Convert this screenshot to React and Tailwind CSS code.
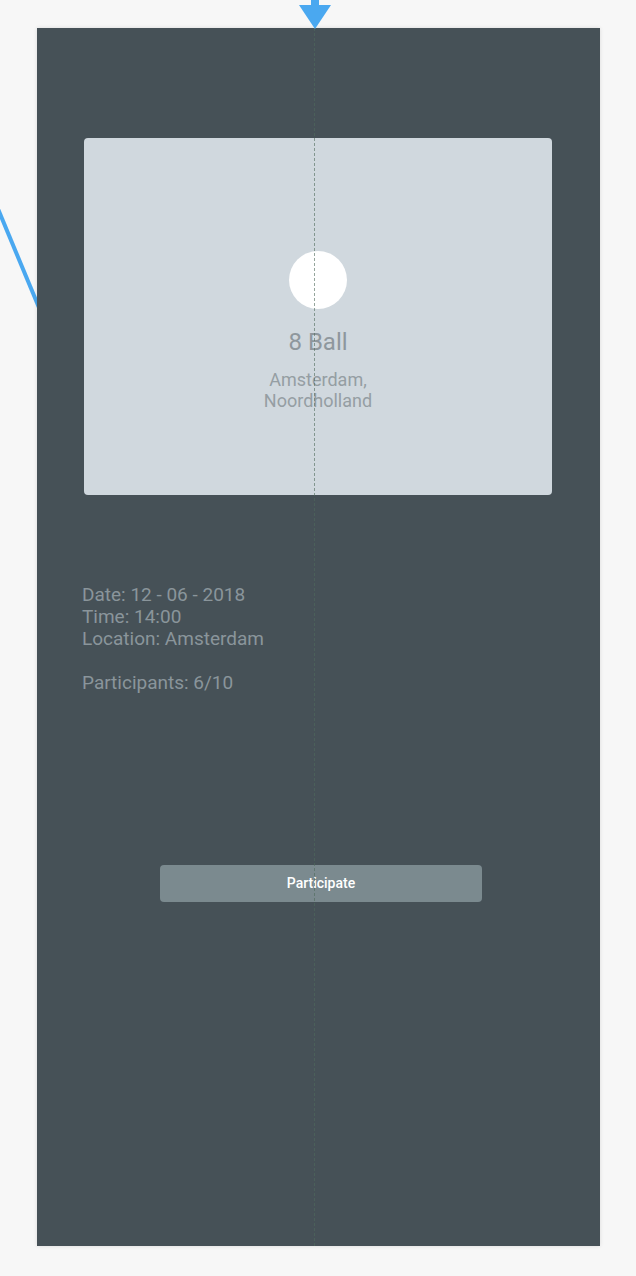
export default function App() {
  return (
    <div className="relative w-[636px] h-[1276px] overflow-hidden bg-[#f7f7f7] font-['Roboto',sans-serif]">
      {/* connector line coming from the left */}
      <svg className="absolute left-0 top-[200px]" width="40" height="120" viewBox="0 0 40 120">
        <line x1="-2" y1="9" x2="40" y2="110" stroke="#4aa8f0" strokeWidth="4" />
      </svg>

      {/* screen frame */}
      <div className="relative ml-[37px] mt-[28px] w-[563px] h-[1218px] bg-[#465157] shadow-[0_0_4px_rgba(0,0,0,0.12)]">
        <div className="pt-[110px] pl-[47px]">
          <div className="w-[468px] h-[357px] rounded-[4px] bg-[#d0d8de] flex flex-col items-center pt-[113px]">
            <div className="w-[58px] h-[58px] rounded-full bg-white" />
            <div className="mt-[18px] text-[24px] leading-[30px] text-[#8e979d]">8 Ball</div>
            <div className="mt-[12px] text-[18px] leading-[21px] text-[#959ea3] text-center">
              Amsterdam,
              <br />
              Noordholland
            </div>
          </div>
        </div>

        <div className="mt-[89px] pl-[45px] text-[19px] leading-[22px] text-[#8a959b]">
          <div>Date: 12 - 06 - 2018</div>
          <div>Time: 14:00</div>
          <div>Location: Amsterdam</div>
          <div className="mt-[22px]">Participants: 6/10</div>
        </div>

        <button className="mt-[171px] ml-[123px] w-[322px] h-[37px] rounded-[4px] bg-[#7b8a8f] text-white text-[14px] font-medium">
          Participate
        </button>

        {/* center guide */}
        <div className="absolute left-[277px] top-0 h-full border-l border-dashed border-[#4f6b5c] opacity-60" />
      </div>

      {/* arrow pointing into the frame */}
      <svg className="absolute left-[299px] top-0" width="32" height="30" viewBox="0 0 32 30">
        <rect x="12" y="0" width="8" height="6" fill="#4aa8f0" />
        <polygon points="0,5 32,5 16,29" fill="#4aa8f0" />
      </svg>
    </div>
  );
}
